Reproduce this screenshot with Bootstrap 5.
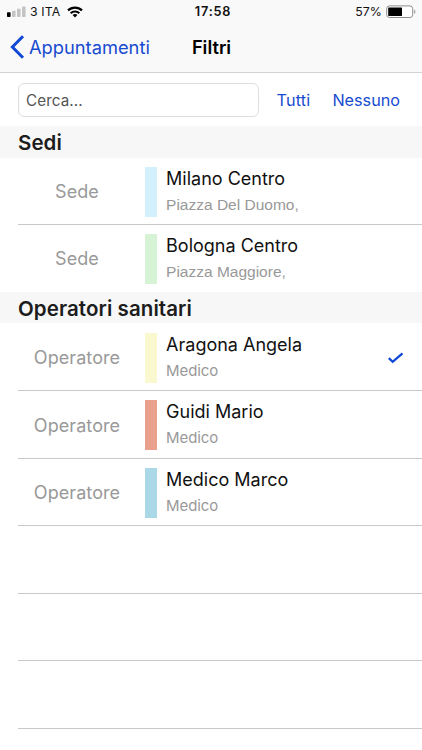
<!DOCTYPE html>
<html lang="it">
<head>
<meta charset="utf-8">
<meta name="viewport" content="width=device-width, initial-scale=1">
<title>Filtri</title>
<link href="https://cdn.jsdelivr.net/npm/bootstrap@5.3.0/dist/css/bootstrap.min.css" rel="stylesheet">
<style>
body { font-family: Inter, "Liberation Sans", sans-serif; color: #111; background: #fff; height: 750px; overflow: hidden; }
.app-head { height: 73px; background: #f9f9f9; border-bottom: 1px solid #d3d3d4; }
.side { flex: 1 1 0; }
.status-bar { height: 24px; font-size: 12px; line-height: 24px; padding: 0 6px 0 7px; }
.carrier { font-size: 12.3px; letter-spacing: .12px; margin: 0 7px 0 4px; }
.clock { font-size: 12.7px; font-weight: 600; letter-spacing: .8px; padding-left: 3px; }
.pct { font-size: 12.3px; letter-spacing: .05px; }
.title-bar { height: 46px; line-height: 46px; padding: 0 10px; }
.back { font-size: 18.3px; letter-spacing: 0; color: #174bd0; }
.page-title { font-size: 18.3px; font-weight: 600; letter-spacing: 0; color: #000; padding-left: 1px; }
.search-bar { height: 53px; padding: 10px 22px 9px 18px; }
.search-input { width: 241px; height: 34px; padding: 0 7px; font-size: 15.2px; border: 1px solid #dedede; border-radius: 6px; letter-spacing: .1px; }
.search-input::placeholder { color: #555; opacity: 1; }
.act { font-size: 16.2px; color: #174bd0; letter-spacing: 0; }
.all { letter-spacing: .2px; margin-right: 22px; }
.sect { height: 32px; line-height: 33px; padding-left: 18px; background: #f7f7f7; font-size: 20.5px; font-weight: 600; letter-spacing: .08px; color: #1c1c1c; }
.sect-short { height: 31px; line-height: 33px; }
.item { height: 67.45px; margin-left: 18px; border-bottom: 1px solid #c9c9cb; }
.item-first { height: 67px; padding-top: 1px; }
.operators .item { padding-top: 1px; }
.operators .item:first-child { height: 68px; padding-top: 2px; }
.kind { width: 118px; font-size: 18px; color: #999; letter-spacing: .07px; }
.swatch { width: 11.4px; height: 50px; margin: 0 9.4px 0 9.3px; }
.label { font-size: 18px; line-height: 24px; color: #111; letter-spacing: 0; }
.sub { font-size: 15px; line-height: 24px; color: #999; margin-top: 2px; letter-spacing: -.1px; }
.place { font-family: "Liberation Sans", sans-serif; font-size: 15.5px; letter-spacing: 0; }
.c-sky { background: #d2f1fd; } .c-green { background: #d6f3d6; } .c-yellow { background: #f9f8cf; }
.c-coral { background: #e9a18d; } .c-blue { background: #abd8e7; }
</style>
<script src="https://cdn.jsdelivr.net/npm/bootstrap@5.3.0/dist/js/bootstrap.bundle.min.js"></script>
</head>
<body>
<header class="app-head">
  <div class="status-bar d-flex align-items-center">
    <div class="side d-flex align-items-center">
      <svg width="19" height="12" viewBox="0 0 19 12"><rect x="0" y="6.3" width="3.6" height="4.7" rx=".7"/><g fill="#c4c4c4"><rect x="5" y="4.7" width="3.6" height="6.3" rx=".7"/><rect x="10" y="2.7" width="3.6" height="8.3" rx=".7"/><rect x="15" y=".6" width="3.6" height="10.4" rx=".7"/></g></svg>
      <span class="carrier">3 ITA</span>
      <svg width="16" height="12" viewBox="0 0 16 12"><g fill="none" stroke="#000" stroke-width="2.2"><path d="M1 4.4C4.9.6 11.1.6 15 4.4"/><path d="M3.7 7.2c2.4-2.3 6.2-2.3 8.6 0"/></g><path d="M8 11.4 5.6 9c1.3-1.3 3.5-1.3 4.8 0z"/></svg>
    </div>
    <div class="clock">17:58</div>
    <div class="side d-flex align-items-center justify-content-end">
      <span class="pct me-1">57%</span>
      <svg width="30" height="14" viewBox="0 0 30 14"><rect x=".7" y=".9" width="26" height="11.6" rx="2.8" fill="#fff" stroke="#8c8c8c"/><rect x="2.2" y="2.5" width="13.8" height="8.4" rx=".6"/><path d="M28.2 4.6V9c1.6-.6 1.6-3.8 0-4.4z" fill="#999"/></svg>
    </div>
  </div>
  <nav class="title-bar d-flex align-items-center">
    <a class="side back d-flex align-items-center text-decoration-none" href="#"><svg class="me-1" width="15" height="24" viewBox="0 0 15 24"><path d="M13 1.3 2.4 12 13 22.7" fill="none" stroke="#1048d6" stroke-width="3"/></svg><span>Appuntamenti</span></a>
    <div class="page-title">Filtri</div>
    <div class="side"></div>
  </nav>
</header>
<main>
  <div class="search-bar d-flex align-items-center">
    <input class="form-control search-input me-auto" type="text" placeholder="Cerca..." aria-label="Cerca">
    <a class="act all text-decoration-none" href="#">Tutti</a>
    <a class="act text-decoration-none" href="#">Nessuno</a>
  </div>
  <h2 class="sect mb-0">Sedi</h2>
  <div class="item item-first d-flex align-items-center"><div class="kind text-center">Sede</div><div class="swatch c-sky"></div><div><div class="label">Milano Centro</div><div class="sub place">Piazza Del Duomo,</div></div></div>
  <div class="item border-bottom-0 d-flex align-items-center"><div class="kind text-center">Sede</div><div class="swatch c-green"></div><div><div class="label">Bologna Centro</div><div class="sub place">Piazza Maggiore,</div></div></div>
  <h2 class="sect sect-short mb-0">Operatori sanitari</h2>
  <div class="operators">
    <div class="item d-flex align-items-center"><div class="kind text-center">Operatore</div><div class="swatch c-yellow"></div><div><div class="label">Aragona Angela</div><div class="sub">Medico</div></div>
      <svg class="ms-auto me-3" width="20" height="16" viewBox="0 0 20 16"><path d="m2.8 8.2 3.9 3.6 9.8-8.4" fill="none" stroke="#1048d6" stroke-width="2.3"/></svg></div>
    <div class="item d-flex align-items-center"><div class="kind text-center">Operatore</div><div class="swatch c-coral"></div><div><div class="label">Guidi Mario</div><div class="sub">Medico</div></div></div>
    <div class="item d-flex align-items-center"><div class="kind text-center">Operatore</div><div class="swatch c-blue"></div><div><div class="label">Medico Marco</div><div class="sub">Medico</div></div></div>
    <div class="item"></div>
    <div class="item"></div>
    <div class="item"></div>
  </div>
</main>
</body>
</html>
